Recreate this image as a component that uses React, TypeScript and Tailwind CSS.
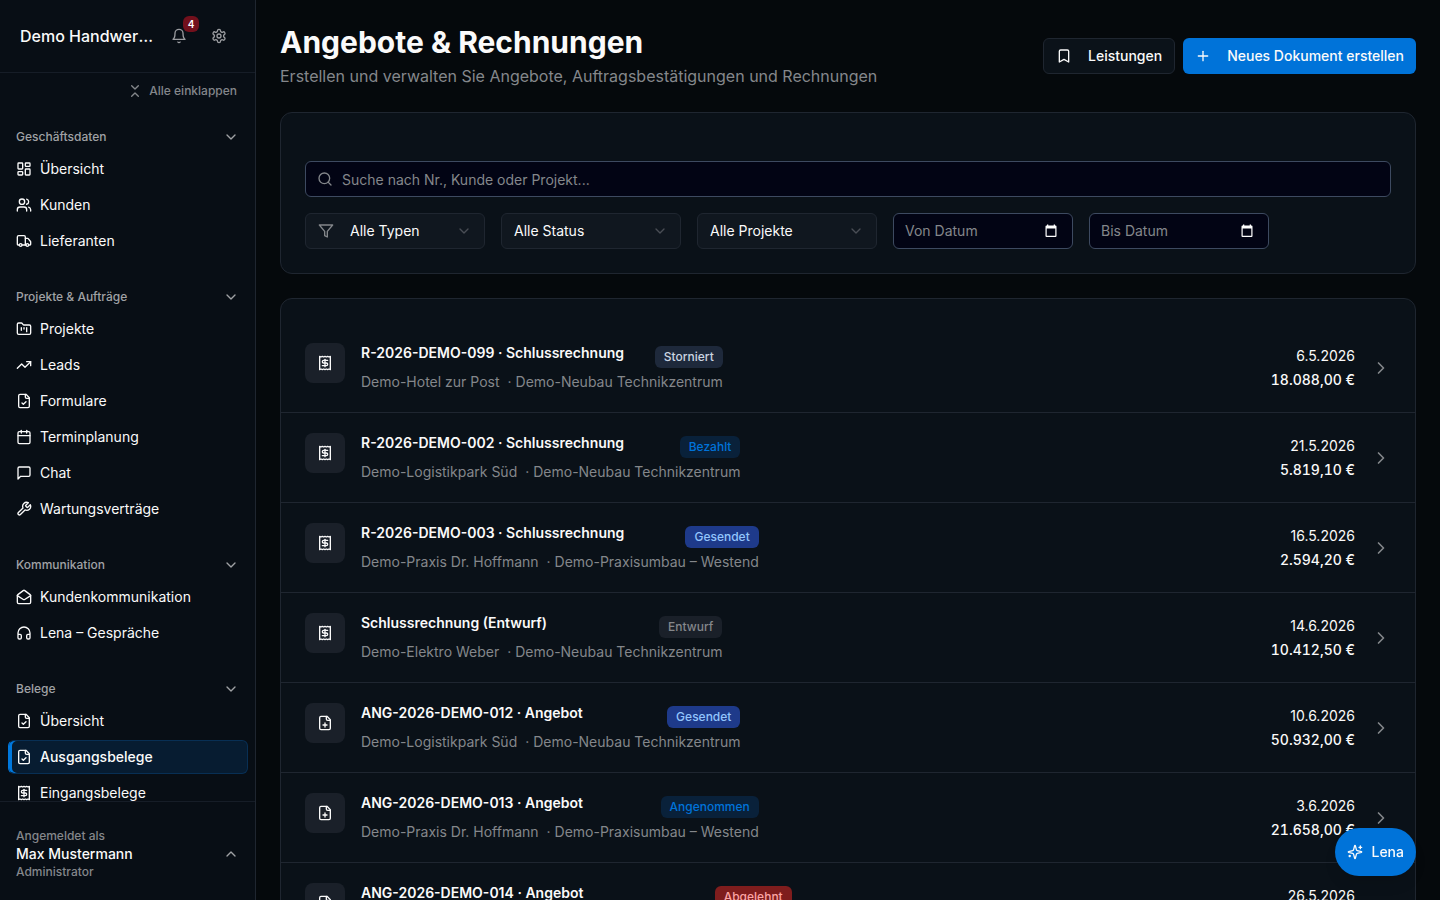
import type { ComponentType, ReactNode } from 'react';
import {
  ChevronDown, ChevronUp, ChevronRight, LayoutDashboard, Users, Truck, FolderKanban,
  TrendingUp, Calendar, MailOpen, Headphones, Bookmark, Plus, Search,
} from 'lucide-react';

type Icon = ComponentType<{ className?: string }>;

function Stroke({ className, children }: { className?: string; children: ReactNode }) {
  return (
    <svg viewBox="0 0 24 24" fill="none" stroke="currentColor" strokeWidth="2" strokeLinecap="round" strokeLinejoin="round" className={className}>
      {children}
    </svg>
  );
}

const ReceiptIcon: Icon = ({ className }) => (
  <Stroke className={className}>
    <path d="M4 2v20l2-1 2 1 2-1 2 1 2-1 2 1 2-1 2 1V2l-2 1-2-1-2 1-2-1-2 1-2-1-2 1Z" />
    <path d="M16 8h-6a2 2 0 1 0 0 4h4a2 2 0 1 1 0 4H8" />
    <path d="M12 17.5v-11" />
  </Stroke>
);

const FileCheckIcon: Icon = ({ className }) => (
  <Stroke className={className}>
    <path d="M15 2H6a2 2 0 0 0-2 2v16a2 2 0 0 0 2 2h12a2 2 0 0 0 2-2V7Z" />
    <path d="M14 2v4a2 2 0 0 0 2 2h4" />
    <path d="m9 15 2 2 4-4" />
  </Stroke>
);

const FilePlusIcon: Icon = ({ className }) => (
  <Stroke className={className}>
    <path d="M15 2H6a2 2 0 0 0-2 2v16a2 2 0 0 0 2 2h12a2 2 0 0 0 2-2V7Z" />
    <path d="M14 2v4a2 2 0 0 0 2 2h4" />
    <path d="M9 15h6" />
    <path d="M12 18v-6" />
  </Stroke>
);

const ChatIcon: Icon = ({ className }) => (
  <Stroke className={className}>
    <path d="M21 15a2 2 0 0 1-2 2H7l-4 4V5a2 2 0 0 1 2-2h14a2 2 0 0 1 2 2z" />
  </Stroke>
);

const WrenchIcon: Icon = ({ className }) => (
  <Stroke className={className}>
    <path d="M14.7 6.3a1 1 0 0 0 0 1.4l1.6 1.6a1 1 0 0 0 1.4 0l3.77-3.77a6 6 0 0 1-7.94 7.94l-6.91 6.91a2.12 2.12 0 0 1-3-3l6.91-6.91a6 6 0 0 1 7.94-7.94l-3.76 3.76z" />
  </Stroke>
);

const BellIcon: Icon = ({ className }) => (
  <Stroke className={className}>
    <path d="M6 8a6 6 0 0 1 12 0c0 7 3 9 3 9H3s3-2 3-9" />
    <path d="M10.3 21a1.94 1.94 0 0 0 3.4 0" />
  </Stroke>
);

const GearIcon: Icon = ({ className }) => (
  <Stroke className={className}>
    <path d="M12.22 2h-.44a2 2 0 0 0-2 2v.18a2 2 0 0 1-1 1.73l-.43.25a2 2 0 0 1-2 0l-.15-.08a2 2 0 0 0-2.73.73l-.22.38a2 2 0 0 0 .73 2.73l.15.1a2 2 0 0 1 1 1.72v.51a2 2 0 0 1-1 1.74l-.15.09a2 2 0 0 0-.73 2.73l.22.38a2 2 0 0 0 2.73.73l.15-.08a2 2 0 0 1 2 0l.43.25a2 2 0 0 1 1 1.73V20a2 2 0 0 0 2 2h.44a2 2 0 0 0 2-2v-.18a2 2 0 0 1 1-1.73l.43-.25a2 2 0 0 1 2 0l.15.08a2 2 0 0 0 2.73-.73l.22-.39a2 2 0 0 0-.73-2.73l-.15-.08a2 2 0 0 1-1-1.74v-.5a2 2 0 0 1 1-1.74l.15-.09a2 2 0 0 0 .73-2.73l-.22-.38a2 2 0 0 0-2.73-.73l-.15.08a2 2 0 0 1-2 0l-.43-.25a2 2 0 0 1-1-1.73V4a2 2 0 0 0-2-2z" />
    <circle cx="12" cy="12" r="3" />
  </Stroke>
);

const SparklesIcon: Icon = ({ className }) => (
  <Stroke className={className}>
    <path d="M9.937 15.5A2 2 0 0 0 8.5 14.063l-6.135-1.582a.5.5 0 0 1 0-.962L8.5 9.936A2 2 0 0 0 9.937 8.5l1.582-6.135a.5.5 0 0 1 .963 0L14.063 8.5A2 2 0 0 0 15.5 9.937l6.135 1.581a.5.5 0 0 1 0 .964L15.5 14.063a2 2 0 0 0-1.437 1.437l-1.582 6.135a.5.5 0 0 1-.963 0z" />
    <path d="M20 3v4" />
    <path d="M22 5h-4" />
    <path d="M4 17v2" />
    <path d="M5 18H3" />
  </Stroke>
);

const groups: { title: string; items: { label: string; icon: Icon; active?: boolean }[] }[] = [
  { title: 'Geschäftsdaten', items: [
    { label: 'Übersicht', icon: LayoutDashboard },
    { label: 'Kunden', icon: Users },
    { label: 'Lieferanten', icon: Truck },
  ] },
  { title: 'Projekte & Aufträge', items: [
    { label: 'Projekte', icon: FolderKanban },
    { label: 'Leads', icon: TrendingUp },
    { label: 'Formulare', icon: FileCheckIcon },
    { label: 'Terminplanung', icon: Calendar },
    { label: 'Chat', icon: ChatIcon },
    { label: 'Wartungsverträge', icon: WrenchIcon },
  ] },
  { title: 'Kommunikation', items: [
    { label: 'Kundenkommunikation', icon: MailOpen },
    { label: 'Lena – Gespräche', icon: Headphones },
  ] },
  { title: 'Belege', items: [
    { label: 'Übersicht', icon: FileCheckIcon },
    { label: 'Ausgangsbelege', icon: FileCheckIcon, active: true },
    { label: 'Eingangsbelege', icon: ReceiptIcon },
  ] },
];

const badgeStyles = {
  Storniert: 'bg-[#1e293b] text-[#cbd5e1]',
  Bezahlt: 'bg-[#09213a] text-[#0073d9]',
  Gesendet: 'bg-[#1e3a8a] text-[#93c5fd]',
  Entwurf: 'bg-[#1a2029] text-[#84878b]',
  Angenommen: 'bg-[#09213a] text-[#0073d9]',
  Abgelehnt: 'bg-[#7f1d1d] text-[#fca5a5]',
};

type Doc = { title: string; customer: string; project: string; status: keyof typeof badgeStyles; date: string; total: string; icon: Icon };

const docs: Doc[] = [
  { title: 'R-2026-DEMO-099 · Schlussrechnung', customer: 'Demo-Hotel zur Post', project: 'Demo-Neubau Technikzentrum', status: 'Storniert', date: '6.5.2026', total: '18.088,00 €', icon: ReceiptIcon },
  { title: 'R-2026-DEMO-002 · Schlussrechnung', customer: 'Demo-Logistikpark Süd', project: 'Demo-Neubau Technikzentrum', status: 'Bezahlt', date: '21.5.2026', total: '5.819,10 €', icon: ReceiptIcon },
  { title: 'R-2026-DEMO-003 · Schlussrechnung', customer: 'Demo-Praxis Dr. Hoffmann', project: 'Demo-Praxisumbau – Westend', status: 'Gesendet', date: '16.5.2026', total: '2.594,20 €', icon: ReceiptIcon },
  { title: 'Schlussrechnung (Entwurf)', customer: 'Demo-Elektro Weber', project: 'Demo-Neubau Technikzentrum', status: 'Entwurf', date: '14.6.2026', total: '10.412,50 €', icon: ReceiptIcon },
  { title: 'ANG-2026-DEMO-012 · Angebot', customer: 'Demo-Logistikpark Süd', project: 'Demo-Neubau Technikzentrum', status: 'Gesendet', date: '10.6.2026', total: '50.932,00 €', icon: FilePlusIcon },
  { title: 'ANG-2026-DEMO-013 · Angebot', customer: 'Demo-Praxis Dr. Hoffmann', project: 'Demo-Praxisumbau – Westend', status: 'Angenommen', date: '3.6.2026', total: '21.658,00 €', icon: FilePlusIcon },
  { title: 'ANG-2026-DEMO-014 · Angebot', customer: 'Demo-Hausverwaltung Nord', project: 'Demo-Sanierung Wohnanlage Ost', status: 'Abgelehnt', date: '26.5.2026', total: '8.940,00 €', icon: FilePlusIcon },
];

function Sidebar() {
  return (
    <aside className="flex w-64 shrink-0 flex-col border-r border-[#1f2630] bg-[#080e15]">
      <div className="flex h-[73px] shrink-0 items-center border-b border-[#161d27] px-5">
        <span className="w-[134px] truncate text-base font-medium">Demo Handwerk GmbH</span>
        <button aria-label="Benachrichtigungen" className="relative ml-[9px] grid size-8 place-items-center text-[#9a9ca0]">
          <BellIcon className="size-4" />
          <span className="absolute -top-1 -right-1 grid size-4 place-items-center rounded-md bg-[#72101c] text-[10px] font-semibold text-white">4</span>
        </button>
        <button aria-label="Einstellungen" className="ml-2 grid size-8 place-items-center text-[#9a9ca0]">
          <GearIcon className="size-4" />
        </button>
      </div>
      <div className="flex min-h-0 flex-1 flex-col overflow-hidden">
        <div className="flex h-9 shrink-0 items-center justify-end pr-[18px]">
          <button className="flex items-center gap-[6px] text-xs font-medium text-[#84878b]">
            <Stroke className="size-4">
              <path d="m7 20 5-5 5 5" />
              <path d="m7 4 5 5 5-5" />
            </Stroke>
            Alle einklappen
          </button>
        </div>
        <nav className="flex flex-col gap-6 pt-[14px] pr-[7px] pl-2">
          {groups.map((g) => (
            <section key={g.title}>
              <button className="flex h-7 w-full items-center justify-between pr-[9px] pl-2 text-xs font-medium text-[#a0a2a5]">
                {g.title}
                <ChevronDown className="size-4" />
              </button>
              <ul className="flex flex-col">
                {g.items.map((it) => (
                  <li key={it.label} className="py-px">
                    <a
                      href="#"
                      className={
                        it.active
                          ? 'flex h-[34px] items-center gap-2 rounded-md border border-[#082f54] border-l-[#0078dd] bg-[#071c31] pl-[7px] text-sm font-medium shadow-[inset_3px_0_0_#0078dd]'
                          : 'flex h-[34px] items-center gap-2 pl-2 text-sm'
                      }
                    >
                      <it.icon className="size-4 shrink-0" />
                      {it.label}
                    </a>
                  </li>
                ))}
              </ul>
            </section>
          ))}
        </nav>
      </div>
      <button className="flex h-[99px] shrink-0 items-center justify-between border-t border-[#161d27] pt-[10px] pr-4 pb-1 pl-4 text-left">
        <span className="flex flex-col">
          <span className="text-xs leading-[18px] font-medium text-[#84878b]">Angemeldet als</span>
          <span className="text-sm leading-[18px] font-medium">Max Mustermann</span>
          <span className="text-xs leading-[18px] font-medium text-[#84878b]">Administrator</span>
        </span>
        <ChevronUp className="size-4 text-[#a0a2a5]" />
      </button>
    </aside>
  );
}

function Card({ children, className }: { children: ReactNode; className: string }) {
  return <section className={`rounded-xl border border-[#1f2630] bg-[#0a1118] ${className}`}>{children}</section>;
}

function FilterSelect({ label, options, funnel }: { label: string; options: string[]; funnel?: boolean }) {
  return (
    <label className="flex h-9 w-[180px] items-center rounded-md border border-[#1f2630] bg-[#10171f] px-3">
      {funnel && (
        <Stroke className="mr-4 size-4 shrink-0 text-[#84878b]">
          <path d="M22 3H2l8 9.460V19l4 2v-8.540L22 3Z" />
        </Stroke>
      )}
      <select aria-label={label} className="min-w-0 flex-1 appearance-none bg-transparent text-sm outline-none">
        {options.map((o) => <option key={o}>{o}</option>)}
      </select>
      <ChevronDown className="size-4 shrink-0 text-[#4a4e55]" />
    </label>
  );
}

function DateField({ label }: { label: string }) {
  return (
    <div className="flex h-9 w-[180px] items-center justify-between rounded-md border border-[#3d4a60] bg-[#020414] pr-[14px] pl-[11px]">
      <input aria-label={label} placeholder={label} className="w-28 bg-transparent text-sm outline-none placeholder:text-[#84878b]" />
      <svg viewBox="0 0 14 14" className="size-[14px]" fill="white">
        <path fillRule="evenodd" d="M3 .5h1.300v1h5.400v-1H11v1h.5a1 1 0 0 1 1 1V12a1 1 0 0 1-1 1h-9a1 1 0 0 1-1-1V2.500a1 1 0 0 1 1-1H3ZM2.700 4.500v7.300h8.600V4.500Z" />
      </svg>
    </div>
  );
}

export default function App() {
  return (
    <div className="flex h-screen overflow-hidden bg-[#05090c] font-['Inter',sans-serif] text-[#fafafa]">
      <Sidebar />
      <main className="min-w-0 flex-1 overflow-hidden px-6 pt-6">
        <header className="flex items-center justify-between">
          <div>
            <h1 className="text-3xl leading-9 font-bold">Angebote &amp; Rechnungen</h1>
            <p className="mt-1 text-base text-[#84878b]">Erstellen und verwalten Sie Angebote, Auftragsbestätigungen und Rechnungen</p>
          </div>
          <div className="flex gap-2">
            <button className="flex h-9 items-center gap-4 rounded-md border border-[#1f2630] bg-[#0b1219] px-3 text-sm font-medium">
              <Bookmark className="size-4" />
              Leistungen
            </button>
            <button className="flex h-9 items-center gap-4 rounded-md bg-[#0073d9] px-3 text-sm font-medium">
              <Plus className="size-4" />
              Neues Dokument erstellen
            </button>
          </div>
        </header>
        <Card className="mt-6 px-6 pt-12 pb-6">
          <label className="flex h-9 items-center gap-[9px] rounded-md border border-[#3d4a60] bg-[#020414] px-[11px]">
            <Search className="size-4 text-[#84878b]" />
            <input aria-label="Suche" placeholder="Suche nach Nr., Kunde oder Projekt..." className="min-w-0 flex-1 bg-transparent pt-0.5 text-sm outline-none placeholder:text-[#84878b]" />
          </label>
          <div className="mt-4 flex flex-wrap gap-4">
            <FilterSelect label="Typ" options={['Alle Typen']} funnel />
            <FilterSelect label="Status" options={['Alle Status']} />
            <FilterSelect label="Projekt" options={['Alle Projekte']} />
            <DateField label="Von Datum" />
            <DateField label="Bis Datum" />
          </div>
        </Card>
        <Card className="mt-6 pt-6">
          <ul className="divide-y divide-[#1f2630]">
            {docs.map((d) => (
              <li key={d.title}>
                <a href="#" className="flex h-[89px] items-center px-6">
                  <span className="mb-[9px] grid size-10 shrink-0 place-items-center rounded-lg bg-[#1a2029]">
                    <d.icon className="size-4" />
                  </span>
                  <span className="ml-4 flex flex-col gap-1">
                    <span className="flex justify-between gap-4">
                      <span className="text-sm leading-5 font-semibold">{d.title}</span>
                      <span className={`mt-[3px] flex h-[22px] items-center rounded-md px-[9px] text-xs font-medium ${badgeStyles[d.status]}`}>{d.status}</span>
                    </span>
                    <span className="flex gap-2 text-sm leading-5 text-[#84878b]">
                      <span>{d.customer}</span>
                      <span>· {d.project}</span>
                    </span>
                  </span>
                  <span className="ml-auto flex flex-col items-end text-sm leading-6">
                    <span>{d.date}</span>
                    <span className="font-medium tabular-nums">{d.total}</span>
                  </span>
                  <ChevronRight className="ml-4 size-5 text-[#84878b]" />
                </a>
              </li>
            ))}
          </ul>
        </Card>
      </main>
      <button className="fixed right-6 bottom-6 flex h-12 items-center gap-2 rounded-full bg-[#0073d9] px-3 text-sm font-medium shadow-lg">
        <SparklesIcon className="size-4" />
        Lena
      </button>
    </div>
  );
}
